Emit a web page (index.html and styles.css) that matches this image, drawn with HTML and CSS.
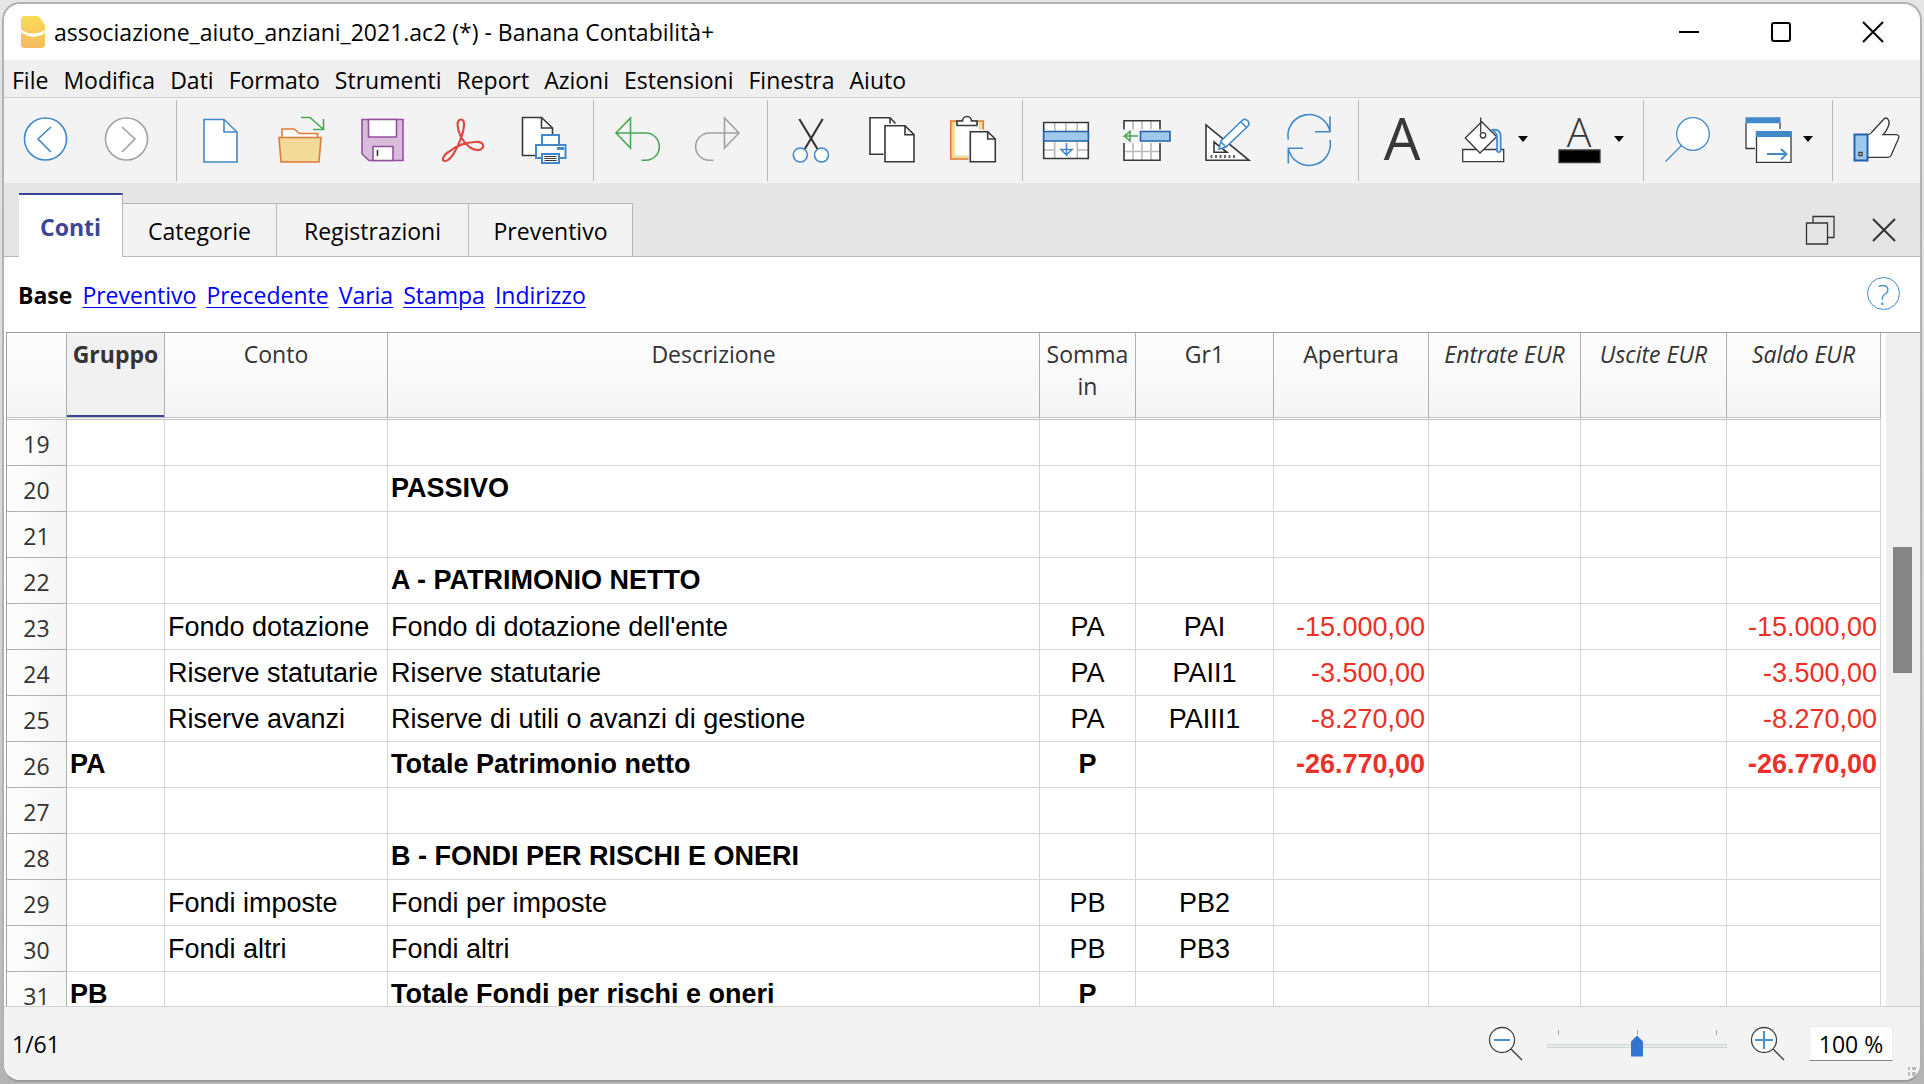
FILE: index.html
```html
<!DOCTYPE html>
<html lang="it">
<head>
<meta charset="utf-8">
<title>associazione_aiuto_anziani_2021.ac2 (*) - Banana Contabilità+</title>
<link rel="stylesheet" href="styles.css">
</head>
<body>
<div class="window">
  <header class="titlebar">
    <svg class="app-logo" width="26" height="34" viewBox="0 0 26 34">
      <defs>
        <linearGradient id="banana" x1="0" y1="0" x2="0" y2="1"><stop offset="0" stop-color="#fadb57"/><stop offset="1" stop-color="#f3bb5f"/></linearGradient>
      </defs>
      <path d="M4 1H17Q19 1 21 4L25 10V29Q25 33 21 33H4Q1 33 1 29V5Q1 1 4 1Z" fill="url(#banana)"/>
      <path d="M1 15Q13 22 25 15V18Q13 26 1 17Z" fill="#fff"/>
    </svg>
    <h1 class="title">associazione_aiuto_anziani_2021.ac2 (*) - Banana Contabilità+</h1>
    <div class="window-controls">
      <button class="window-button" aria-label="Riduci a icona"><svg width="22" height="22" viewBox="0 0 22 22"><path d="M1 11H21" class="ctl"/></svg></button>
      <button class="window-button" aria-label="Ingrandisci"><svg width="22" height="22" viewBox="0 0 22 22"><rect x="2" y="2" width="18" height="18" rx="2" class="ctl"/></svg></button>
      <button class="window-button" aria-label="Chiudi"><svg width="22" height="22" viewBox="0 0 22 22"><path d="M1 1L21 21M21 1L1 21" class="ctl"/></svg></button>
    </div>
  </header>

  <nav class="menubar" aria-label="Menu">
    <button class="menu">File</button>
    <button class="menu">Modifica</button>
    <button class="menu">Dati</button>
    <button class="menu">Formato</button>
    <button class="menu">Strumenti</button>
    <button class="menu">Report</button>
    <button class="menu">Azioni</button>
    <button class="menu">Estensioni</button>
    <button class="menu">Finestra</button>
    <button class="menu">Aiuto</button>
  </nav>

  <div class="toolbar" role="toolbar" aria-label="Strumenti">
    <div class="tool-group">
      <button class="tool" aria-label="Indietro"><svg class="icon blue" viewBox="0 0 48 48"><circle cx="23.500" cy="24" r="21" class="paper"/><path d="M29 12L16 24L29 37"/></svg></button>
      <button class="tool" aria-label="Avanti"><svg class="icon grey" viewBox="0 0 48 48"><circle cx="23.500" cy="24" r="21" class="paper"/><path d="M19 12L32 24L19 37"/></svg></button>
    </div>
    <div class="tool-group">
      <button class="tool" aria-label="Nuovo"><svg class="icon blue" viewBox="0 0 48 48"><path class="paper" d="M8 4.500H28L41 17V47H8Z"/><path d="M28 4.500V17H41"/></svg></button>
      <button class="tool" aria-label="Apri"><svg class="icon orange" viewBox="0 0 48 48"><path class="paper" d="M5 22V14H17L22.500 18.500H40.500V22"/><path d="M2 22.500H44L42 47H4Z" fill="#f2da98"/><path class="green-line" d="M24 2.500H33L46 14M46.500 4V14.500H36"/></svg></button>
      <button class="tool" aria-label="Salva"><svg class="icon purple" viewBox="0 0 48 48"><path d="M4 4.500H45V45.500H11L4 39Z" fill="#d8bcd9"/><path class="paper" d="M10.500 4.500H38.500V22H10.500ZM15 31.500H35V45.500H15Z"/><path d="M19.500 35V41" stroke="#333"/></svg></button>
      <button class="tool" aria-label="Esporta PDF"><svg class="icon red" viewBox="0 0 48 48"><path d="M22 4.500C17 4.500 18 14 22 22C26 29 33 36 40 35C47 33 45 26 36 27C27 27 17 31 11 36C4 40 2 46 6 46C12 46 19 32 22 23C25 15 27 4.500 22 4.500Z"/></svg></button>
      <button class="tool" aria-label="Stampa"><svg class="icon dark" viewBox="0 0 48 48"><path class="paper" d="M2.500 2.500H21.500L32.500 13V40.500H2.500Z"/><path d="M21.500 2.500V13H32.500"/><g stroke="#4289ca" stroke-width="2" fill="#fff"><path d="M22 30V20H39V30"/><path d="M16 30H45.500V43H16Z"/><path d="M22 39H39V48H22Z"/></g><path d="M37 32H44V35H37Z" fill="#4289ca" stroke="none"/><path d="M24.500 41.500H36.500M24.500 43.500H36.500M24.500 45.500H36.500" stroke-width="1"/></svg></button>
    </div>
    <div class="tool-group">
      <button class="tool" aria-label="Annulla"><svg class="icon green" viewBox="0 0 48 48"><path d="M17.500 3V33L3 18Z M3 18H32.700A13.600 13.600 0 0 1 32.700 45.300H28.500"/></svg></button>
      <button class="tool" aria-label="Ripeti"><svg class="icon grey" viewBox="0 0 48 48"><path d="M30.500 3V33L45 18Z M45 18H15.300A13.600 13.600 0 0 0 15.300 45.300H19.500"/></svg></button>
    </div>
    <div class="tool-group">
      <button class="tool" aria-label="Taglia"><svg class="icon dark" viewBox="0 0 48 48"><path d="M12.300 4L30.500 34M35.700 4L17.800 34" stroke-width="2.200"/><g stroke="#4289ca"><circle class="paper" cx="13.300" cy="40" r="7"/><circle class="paper" cx="34.500" cy="40" r="7"/></g></svg></button>
      <button class="tool" aria-label="Copia"><svg class="icon dark" viewBox="0 0 48 48"><path class="paper" d="M15.500 39.300H2V2.700H22L27 8.300H15.500Z" stroke="none"/><path d="M15.500 39.300H2V2.700H22L27.500 8.500M22 2.700V8.500"/><path class="paper" d="M17 10.700H37L46 19.700V46.700H17Z"/><path d="M37 10.700V19.700H46"/></svg></button>
      <button class="tool" aria-label="Incolla"><svg class="icon dark" viewBox="0 0 48 48"><path d="M20 44H1.700V6H34.300V14.500H20Z" fill="#f2da98" stroke="none"/><path d="M20 44H1.700V6H34.300V14.500" stroke="#dd7b38"/><path d="M6 9H30V40.500H6Z" class="paper" stroke="none"/><path class="paper" d="M8 6H13.500A4.500 4.500 0 0 1 22.500 6H28V10.500H8Z"/><path d="M19.500 15H38.500V47H19.500Z" fill="#f3f3f3" stroke="none"/><path class="paper" d="M21.300 16.700H38.700L46.300 24V46.700H21.300Z"/><path d="M38.700 16.700V24H46.300"/></svg></button>
    </div>
    <div class="tool-group">
      <button class="tool" aria-label="Aggiungi righe"><svg class="icon dark" viewBox="0 0 48 48"><path class="paper" stroke="none" d="M1.700 7.500H46.300V43.500H1.700Z"/><path stroke="#b8b8b8" d="M12.700 8V16M24 8V16M35.300 8V16M12.700 27V43M35.300 27V43M2 35H12.700M35.300 35H46"/><path d="M1.700 7.500H46.300V43.500H1.700Z"/><path d="M1.700 16.500H46.300V26H1.700Z" fill="#9fc9ec" stroke="#2262ac"/><path stroke="#4289ca" d="M24.500 28V40L19 34.500H30L24.500 40"/></svg></button>
      <button class="tool" aria-label="Inserisci celle"><svg class="icon dark" viewBox="0 0 48 48"><path class="paper" stroke="none" d="M1 5.700H37V15H1ZM1 28H37V45.300H1Z"/><path stroke="#b8b8b8" d="M10 6V14.500M19 6V14.500M28 6V14.500M10 28V45M19 28V45M28 28V45M1 36.500H37"/><path d="M1 14.500V5.700H37V14.500M1 28V45.300H37V28"/><path d="M17.500 16.500H47V26H17.500Z" fill="#9fc9ec" stroke="#2262ac"/><path stroke="#49a757" d="M15 21H1.500L7 16.500V26L1.500 21"/></svg></button>
      <button class="tool" aria-label="Modifica tabella"><svg class="icon dark" viewBox="0 0 48 48"><path class="paper" d="M2 10V45.300H45Z"/><path d="M10 27V37.300H23Z"/><path d="M6.500 41.500H31" stroke-dasharray="2 2.500" stroke-width="3" stroke="#666"/><path d="M15 34L17 26L38 5.500Q41 3 44 6Q46 9 43.500 11.500L22 32Z" class="paper" stroke="#4289ca"/><path stroke="#4289ca" d="M37 7L43 13M17 27L22 32"/></svg></button>
      <button class="tool" aria-label="Ricalcola"><svg class="icon blue" viewBox="0 0 48 48"><path d="M3.300 24.700A21 21 0 0 1 45 16.700M45 1.500V16.700H30M45 25A21 21 0 0 1 3.300 33.300M3.300 48.500V33.300H18"/></svg></button>
    </div>
    <div class="tool-group">
      <button class="tool" aria-label="Carattere"><svg class="icon" viewBox="0 0 48 48"><text x="24" y="45" class="letter">A</text></svg></button>
      <button class="tool tool-drop" aria-label="Colore sfondo"><svg class="icon dark thin" viewBox="0 0 48 48"><path class="paper" d="M3.700 34.500H44.700V46.700H3.700Z"/><path class="paper" d="M6.300 23L22.700 6.700L37.700 21.700L21 38Z"/><path d="M21.700 2.500V17.500"/><circle cx="24" cy="20.300" r="2.700"/><path stroke="#4289ca" stroke-width="1.700" fill="#dcebf8" d="M32 15Q42 13 41.700 22V36Q39.500 38.500 38 36V21Q37 16 32 15Z"/></svg><svg class="arrow" viewBox="0 0 10 6"><path d="M0 0H10L5 6Z"/></svg></button>
      <button class="tool tool-drop" aria-label="Colore testo"><svg class="icon dark thin" viewBox="0 0 48 48"><text x="24" y="32" class="letter letter-small">A</text><path d="M4 35H45V47.500H4Z" fill="#000"/></svg><svg class="arrow" viewBox="0 0 10 6"><path d="M0 0H10L5 6Z"/></svg></button>
    </div>
    <div class="tool-group">
      <button class="tool" aria-label="Cerca"><svg class="icon blue thin" viewBox="0 0 48 48"><circle class="paper" cx="30" cy="19" r="16.300"/><path d="M18.500 30.500L2.500 46.500"/></svg></button>
      <button class="tool tool-drop" aria-label="Finestre"><svg class="icon dark thin" viewBox="0 0 48 48"><path class="paper" stroke="none" d="M2 3H36V33.500H2Z"/><path d="M2 8V33.500H11M36 8V14"/><path d="M1.500 2.300H36.500V8.300H1.500Z" class="band"/><path fill="#f3f3f3" stroke="none" d="M11 14.500H48V34H11Z"/><path class="paper" d="M12.500 17H47V47.300H12.500Z"/><path d="M12 16H47.500V22H12Z" class="band"/><path stroke="#4289ca" stroke-width="2" d="M23 39H42.500M37 34L42.500 39L37 44.500"/></svg><svg class="arrow" viewBox="0 0 10 6"><path d="M0 0H10L5 6Z"/></svg></button>
    </div>
    <div class="tool-group">
      <button class="tool" aria-label="Feedback"><svg class="icon dark thin" viewBox="0 0 48 48"><path class="paper" d="M15 19.500Q18 20 20 17L31 5Q34 1 36.500 5Q38 8 36 12Q34 17 31 19.700H44Q48 20 46.500 23.500L39 40.500Q38 42.300 36 42.300H15Z"/><path d="M2.500 19.500H15.500V45.500H2.500Z" fill="#9fc9ec" stroke="#2262ac" stroke-width="2"/><path d="M7 37.500H10V40.500H7Z" fill="#fff"/></svg></button>
    </div>
  </div>

  <div class="tabbar">
    <div class="tabs" role="tablist">
      <button class="tab tab-active tab-conti" role="tab" aria-selected="true">Conti</button>
      <button class="tab tab-categorie" role="tab">Categorie</button>
      <button class="tab tab-registrazioni" role="tab">Registrazioni</button>
      <button class="tab tab-preventivo" role="tab">Preventivo</button>
    </div>
    <div class="tab-controls">
      <button class="plain" aria-label="Ripristina"><svg width="30" height="30" viewBox="0 0 30 30"><g fill="none" stroke="#333" stroke-width="1.300"><path d="M8 8V1.500H29V22.500H22"/><path d="M1.500 8H22.500V29H1.500Z"/></g></svg></button>
      <button class="plain" aria-label="Chiudi tabella"><svg width="24" height="24" viewBox="0 0 24 24"><path d="M1 1L23 23M23 1L1 23" stroke="#333" stroke-width="2"/></svg></button>
    </div>
  </div>

  <nav class="views" aria-label="Viste">
    <strong>Base</strong>
    <a href="#preventivo">Preventivo</a>
    <a href="#precedente">Precedente</a>
    <a href="#varia">Varia</a>
    <a href="#stampa">Stampa</a>
    <a href="#indirizzo">Indirizzo</a>
    <button class="plain help" aria-label="Aiuto vista">?</button>
  </nav>

  <main class="sheet">
    <div class="grid">
      <table class="accounts">
        <colgroup>
          <col class="w-num"><col class="w-gruppo"><col class="w-conto"><col><col class="w-somma"><col class="w-gr"><col class="w-apertura"><col class="w-entrate"><col class="w-uscite"><col class="w-saldo">
        </colgroup>
        <thead>
          <tr><td class="corner"></td><th scope="col" class="current">Gruppo</th><th scope="col">Conto</th><th scope="col">Descrizione</th><th scope="col">Somma in</th><th scope="col">Gr1</th><th scope="col">Apertura</th><th scope="col" class="computed">Entrate EUR</th><th scope="col" class="computed">Uscite EUR</th><th scope="col" class="computed">Saldo EUR</th></tr>
        </thead>
        <tbody>
          <tr><th scope="row">19</th><td></td><td></td><td></td><td></td><td></td><td></td><td></td><td></td><td></td></tr>
          <tr class="total"><th scope="row">20</th><td></td><td></td><td>PASSIVO</td><td></td><td></td><td></td><td></td><td></td><td></td></tr>
          <tr><th scope="row">21</th><td></td><td></td><td></td><td></td><td></td><td></td><td></td><td></td><td></td></tr>
          <tr class="total"><th scope="row">22</th><td></td><td></td><td>A - PATRIMONIO NETTO</td><td></td><td></td><td></td><td></td><td></td><td></td></tr>
          <tr><th scope="row">23</th><td></td><td>Fondo dotazione</td><td>Fondo di dotazione dell'ente</td><td class="mid">PA</td><td class="mid">PAI</td><td class="amount">-15.000,00</td><td></td><td></td><td class="amount">-15.000,00</td></tr>
          <tr><th scope="row">24</th><td></td><td>Riserve statutarie</td><td>Riserve statutarie</td><td class="mid">PA</td><td class="mid">PAII1</td><td class="amount">-3.500,00</td><td></td><td></td><td class="amount">-3.500,00</td></tr>
          <tr><th scope="row">25</th><td></td><td>Riserve avanzi</td><td>Riserve di utili o avanzi di gestione</td><td class="mid">PA</td><td class="mid">PAIII1</td><td class="amount">-8.270,00</td><td></td><td></td><td class="amount">-8.270,00</td></tr>
          <tr class="total"><th scope="row">26</th><td>PA</td><td></td><td>Totale Patrimonio netto</td><td class="mid">P</td><td></td><td class="amount">-26.770,00</td><td></td><td></td><td class="amount">-26.770,00</td></tr>
          <tr><th scope="row">27</th><td></td><td></td><td></td><td></td><td></td><td></td><td></td><td></td><td></td></tr>
          <tr class="total"><th scope="row">28</th><td></td><td></td><td>B - FONDI PER RISCHI E ONERI</td><td></td><td></td><td></td><td></td><td></td><td></td></tr>
          <tr><th scope="row">29</th><td></td><td>Fondi imposte</td><td>Fondi per imposte</td><td class="mid">PB</td><td class="mid">PB2</td><td></td><td></td><td></td><td></td></tr>
          <tr><th scope="row">30</th><td></td><td>Fondi altri</td><td>Fondi altri</td><td class="mid">PB</td><td class="mid">PB3</td><td></td><td></td><td></td><td></td></tr>
          <tr class="total"><th scope="row">31</th><td>PB</td><td></td><td>Totale Fondi per rischi e oneri</td><td class="mid">P</td><td></td><td></td><td></td><td></td><td></td></tr>
        </tbody>
      </table>
    </div>
    <div class="scrollbar"><div class="scroll-thumb"></div></div>
  </main>

  <footer class="statusbar">
    <span class="position">1/61</span>
    <button class="plain" aria-label="Riduci zoom"><svg width="36" height="36" viewBox="0 0 36 36"><circle cx="14" cy="14" r="12.500" fill="#fff" stroke="#444" stroke-width="1.300"/><path d="M23 23L34 34" stroke="#444" stroke-width="1.500"/><path d="M6 14H22" stroke="#4a90cf" stroke-width="2"/></svg></button>
    <input class="zoom" type="range" min="0" max="200" value="100" aria-label="Zoom">
    <button class="plain" aria-label="Aumenta zoom"><svg width="36" height="36" viewBox="0 0 36 36"><circle cx="14" cy="14" r="12.500" fill="#fff" stroke="#444" stroke-width="1.300"/><path d="M23 23L34 34" stroke="#444" stroke-width="1.500"/><path d="M5 14H23M14 5V23" stroke="#4a90cf" stroke-width="2"/></svg></button>
    <input class="zoom-value" type="text" value="100 %" aria-label="Percentuale zoom">
    <svg class="grip" width="9" height="10" viewBox="0 0 9 10"><path d="M0 1H2V4H0ZM4 1H8V4H4ZM0 6H2V10H0ZM4 6H8V10H4Z" fill="#bbb"/></svg>
  </footer>
</div>
</body>
</html>
```
FILE: styles.css
```css
* {
  box-sizing: border-box;
}

body {
  margin: 0;
  height: 100vh;
  padding: 2px;
  background: linear-gradient(#e6e6e6, #d4d4d4 60%, #b4b4b4);
  color: #000;
  font: 23px/32px "Open Sans", "Noto Sans", sans-serif;
  overflow: hidden;
}

button,
input {
  font: inherit;
  color: inherit;
}

button {
  padding: 0;
  border: 0;
  background: none;
}

svg {
  display: block;
}

.window {
  display: flex;
  flex-direction: column;
  height: 100%;
  border: 2px solid #b2b2b2;
  border-bottom-color: #9c9c9c;
  border-radius: 18px;
  background: #fff;
  overflow: hidden;
}

/* Title bar */
.titlebar {
  display: flex;
  align-items: center;
  height: 56px;
  padding: 0 1px 0 16px;
}

.app-logo {
  flex: none;
}

.title {
  flex: 1;
  margin: 0 0 0 8px;
  font-size: 23px;
  font-weight: 400;
}

.window-controls {
  display: flex;
  align-self: stretch;
}

.window-button {
  display: flex;
  align-items: center;
  justify-content: center;
  width: 92px;
}

.ctl {
  fill: none;
  stroke: #000;
  stroke-width: 2;
}

/* Menu bar */
.menubar {
  display: flex;
  gap: 15px;
  height: 38px;
  padding-left: 8px;
  border-bottom: 1px solid #d0d0d0;
  background: #efefef;
}

.menu {
  height: 38px;
  padding-top: 2px;
}

/* Toolbar */
.toolbar {
  display: flex;
  height: 85px;
  padding: 2px 0 2px 1px;
  background: #f3f3f3;
}

.tool-group {
  display: flex;
  align-items: flex-start;
  padding-right: 9px;
}

.tool-group + .tool-group {
  padding-left: 2px;
  border-left: 1px solid #b8b8b8;
}

.tool-group:last-child {
  padding-right: 0;
}

.tool {
  display: flex;
  align-items: center;
  width: 81px;
  height: 78px;
  padding-left: 17px;
}

.tool-drop {
  width: 96px;
}

.icon {
  flex: none;
  width: 48px;
  height: 48px;
  overflow: visible;
  fill: none;
  stroke-width: 1.6px;
}

.thin {
  stroke-width: 1.3px;
}

.blue { stroke: #4289ca; }
.grey { stroke: #a2a2a2; }
.orange { stroke: #dd7b38; }
.purple { stroke: #9450a0; }
.red { stroke: #dc4a41; stroke-width: 2.2px; }
.green { stroke: #49a757; }
.dark { stroke: #383838; }

.paper {
  fill: #fff;
}

.green-line {
  stroke: #49a757;
}

.band {
  fill: #4289ca;
  stroke: none;
}

.letter {
  font: 400 58px "Open Sans", sans-serif;
  text-anchor: middle;
  fill: #383838;
  stroke: none;
}

.letter-small {
  font: 300 41px "Open Sans", sans-serif;
}

.arrow {
  width: 10px;
  height: 6px;
  margin-left: 11px;
}

/* Tabs */
.tabbar {
  display: flex;
  align-items: flex-end;
  justify-content: space-between;
  height: 74px;
  border-bottom: 1px solid #b8b8b8;
  background: #e5e5e5;
}

.tabs {
  display: flex;
  align-items: flex-end;
  padding-left: 15px;
}

.tab {
  height: 53px;
  padding-top: 2px;
  border: 1px solid #b8b8b8;
  border-width: 1px 1px 0 0;
  background: #f3f3f3;
}

.tab-active {
  height: 64px;
  margin-bottom: -1px;
  padding: 2px 0 0;
  border-top: 2px solid #3b4796;
  background: #fff;
  color: #3b4796;
  font-weight: 700;
}

.tab-conti { width: 104px; }
.tab-categorie { width: 154px; }
.tab-registrazioni { width: 192px; }
.tab-preventivo { width: 164px; }

.tab-controls {
  display: flex;
  align-items: center;
  gap: 37px;
  padding: 0 24px 11px 0;
}

/* View links */
.views {
  display: flex;
  align-items: center;
  gap: 10px;
  height: 75px;
  padding: 0 20px 0 14px;
}

.views a {
  color: #00f;
  text-decoration-thickness: 1px;
  text-underline-offset: 3px;
}

.help {
  width: 33px;
  height: 33px;
  margin: 0 0 2px auto;
  border: 1px solid #4289ca;
  border-radius: 50%;
  color: #4289ca;
  font-size: 28px;
  font-weight: 300;
  line-height: 30px;
}

/* Table */
.sheet {
  display: flex;
  flex: 1;
  min-height: 0;
  margin-left: 2px;
  border-top: 1px solid #a0a0a0;
  border-left: 1px solid #a0a0a0;
}

.grid {
  flex: 1;
  padding-right: 5px;
  overflow: hidden;
}

.accounts {
  width: 100%;
  table-layout: fixed;
  border-collapse: separate;
  border-spacing: 0;
}

.w-num { width: 60px; }
.w-gruppo { width: 98px; }
.w-conto { width: 223px; }
.w-somma { width: 96px; }
.w-gr { width: 138px; }
.w-apertura { width: 155px; }
.w-entrate { width: 152px; }
.w-uscite { width: 146px; }
.w-saldo { width: 154px; }

.accounts thead th,
.accounts .corner {
  height: 87px;
  padding: 5px 0 0;
  border-right: 1px solid #b0b0b0;
  border-bottom: 3px double #c4c4c4;
  background: linear-gradient(#fdfdfd, #f5f5f5);
  color: #333;
  font: 400 23px/32px "Open Sans", sans-serif;
  vertical-align: top;
}

.accounts thead .current {
  background: #f1f1f1;
  box-shadow: inset 0 -2px #3b4796;
  font-weight: 700;
}

.accounts thead .computed {
  font-style: italic;
}

.accounts td {
  height: 46px;
  padding: 0 3px;
  border-right: 1px solid #d6d6d6;
  border-bottom: 1px solid #d6d6d6;
  font: 27px/30px "Liberation Sans", Arial, sans-serif;
  white-space: nowrap;
}

.accounts tbody th {
  height: 46px;
  padding: 2px 0 0;
  border-right: 1px solid #b0b0b0;
  border-bottom: 1px solid #b0b0b0;
  background: linear-gradient(90deg, #fdfdfd, #f5f5f5);
  color: #333;
  font-weight: 400;
}

.accounts .total td {
  padding-bottom: 2px;
  font-weight: 700;
}

.accounts .mid {
  text-align: center;
}

.accounts .amount {
  color: #ec2f27;
  text-align: right;
}

.scrollbar {
  display: grid;
  grid-template-rows: 214fr 126fr 333fr;
  width: 34px;
  padding: 0 8px 0 7px;
  background: #efefef;
}

.scroll-thumb {
  grid-row: 2;
  background: #858585;
}

/* Status bar */
.statusbar {
  display: flex;
  align-items: center;
  height: 74px;
  padding-left: 8px;
  border-top: 1px solid #d0d0d0;
  background: #f3f3f3;
}

.position {
  flex: 1;
}

.zoom {
  appearance: none;
  width: 180px;
  height: 36px;
  margin: 0 23px;
  background:
    linear-gradient(#a5a595, #a5a595) 11px 4px / 1px 5px no-repeat,
    linear-gradient(#a5a595, #a5a595) 90px 4px / 1px 5px no-repeat,
    linear-gradient(#a5a595, #a5a595) 169px 4px / 1px 5px no-repeat;
}

.zoom::-webkit-slider-runnable-track {
  height: 4px;
  margin-top: 4px;
  border: 1px solid #d4d6d6;
  background: #e7eaea;
}

.zoom::-webkit-slider-thumb {
  appearance: none;
  width: 12px;
  height: 21px;
  margin-top: -9px;
  background: #3375d0;
  clip-path: polygon(50% 0, 100% 28%, 100% 100%, 0 100%, 0 28%);
}

.zoom-value {
  width: 84px;
  height: 35px;
  margin: 0 15px 0 23px;
  padding: 0;
  border: 1px solid #ececec;
  border-bottom-color: #868686;
  background: #fff;
  text-align: center;
}

.grip {
  align-self: flex-end;
  margin: 0 3px 4px 0;
}
```
